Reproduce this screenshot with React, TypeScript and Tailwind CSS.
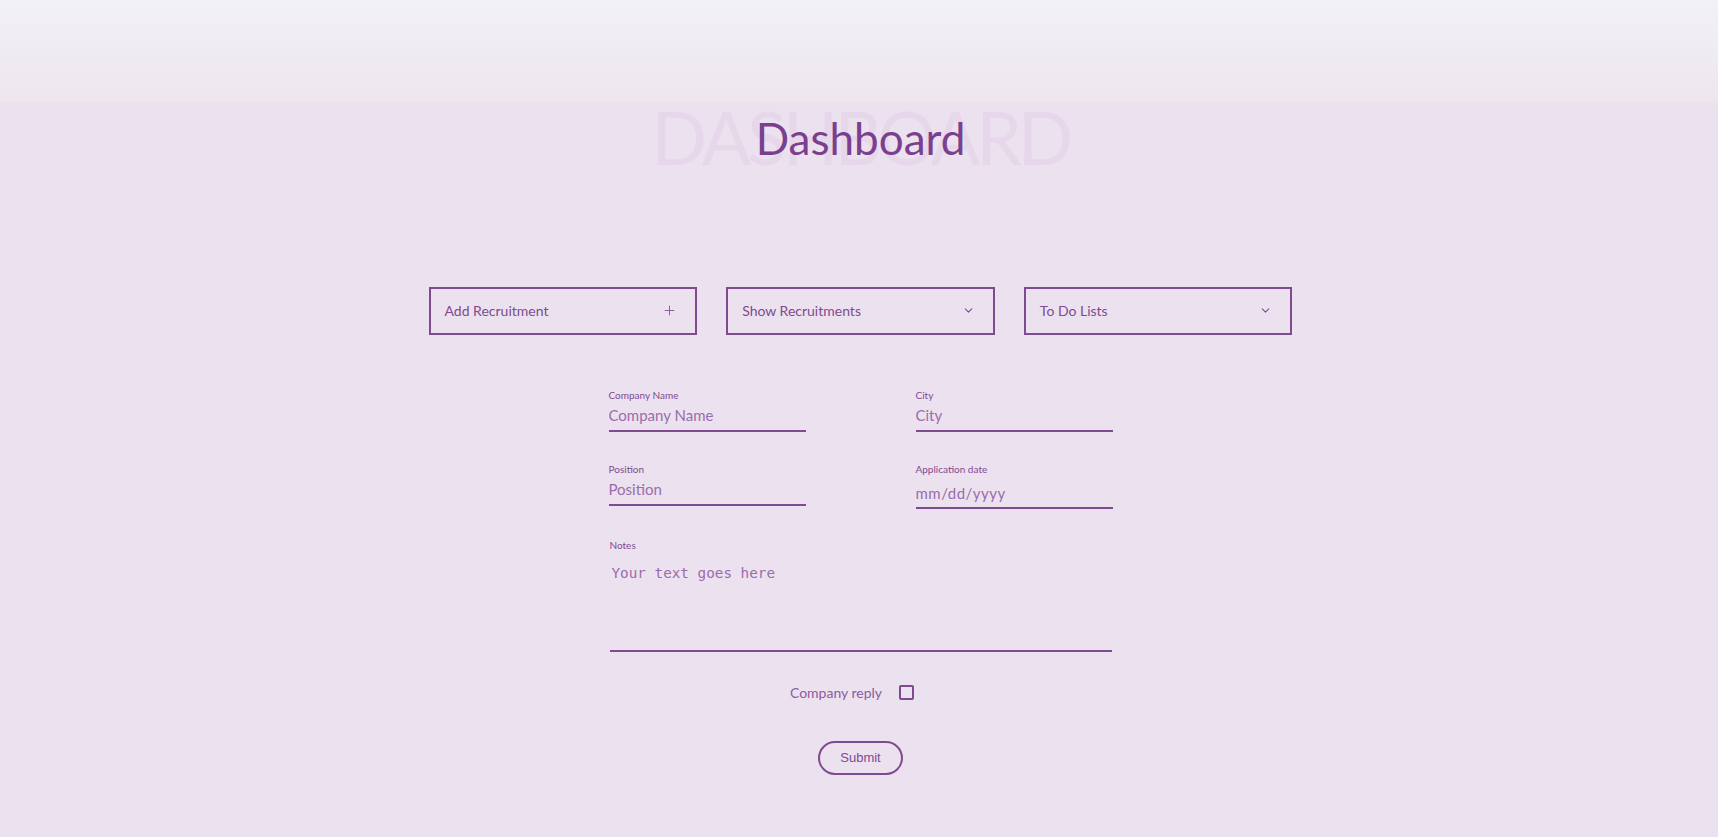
import React, { useState } from "react";
import { Plus, ChevronDown } from "lucide-react";

const font = "font-['Lato','Open_Sans',sans-serif]";

function NavButton({ label, icon }: { label: string; icon: "plus" | "chevron" }) {
  return (
    <button className="h-[48px] border-2 border-[#7e4b91] flex items-center justify-between pl-[14px] pr-[18px] pb-[1px] text-[#7e4b91] text-[14px]">
      <span>{label}</span>
      {icon === "plus" ? <Plus size={15} strokeWidth={1.4} /> : <ChevronDown size={13} strokeWidth={2} />}
    </button>
  );
}

function Field({ label, placeholder, type = "text" }: { label: string; placeholder: string; type?: string }) {
  return (
    <div className="flex flex-col">
      <label className="text-[10px] leading-[12px] text-[#7e4b91]">{label}</label>
      <input
        type="text"
        placeholder={placeholder}
        className={
          "mt-[4px] w-[197px] bg-transparent border-b-2 border-[#7e4b91] outline-none text-[15px] text-[#7e4b91] placeholder:text-[#9a6cad] " +
          (type === "date" ? "h-[30px] pt-[1px] pb-[2px] tracking-[0.5px]" : "h-[27px] pb-[5px]")
        }
      />
    </div>
  );
}

export default function App() {
  const [reply, setReply] = useState(false);

  return (
    <div className={"min-h-screen w-full pl-[3px] bg-[linear-gradient(to_bottom,#f2f1f6_0px,#ede6ef_102px,#ece1ee_102px)] " + font}>
      {/* Title */}
      <div className="relative h-[200px] flex items-center justify-center pt-[75px]">
        <div className="absolute inset-x-0 top-[75px] bottom-0 flex items-center justify-center">
          <span className="text-[73px] leading-none text-[#e6d8ea] tracking-[-4px]">DASHBOARD</span>
        </div>
        <h1 className="relative text-[44px] leading-none text-[#7a3f8e]">Dashboard</h1>
      </div>

      {/* Top actions */}
      <div className="mt-[87px] mx-auto w-[864px] grid grid-cols-3 gap-[29px]">
        <NavButton label="Add Recruitment" icon="plus" />
        <NavButton label="Show Recruitments" icon="chevron" />
        <NavButton label="To Do Lists" icon="chevron" />
      </div>

      {/* Form */}
      <form className="mt-[54px] mx-auto w-[504px] flex flex-col items-stretch" onSubmit={e => e.preventDefault()}>
        <div className="grid grid-cols-2 gap-x-[110px] gap-y-[31px]">
          <Field label="Company Name" placeholder="Company Name" />
          <Field label="City" placeholder="City" />
          <Field label="Position" placeholder="Position" />
          <Field label="Application date" placeholder="mm/dd/yyyy" type="date" />
        </div>

        <div className="mt-[30px] flex flex-col">
          <label className="text-[10px] leading-[12px] text-[#7e4b91] pl-[1px]">Notes</label>
          <textarea
            placeholder="Your text goes here"
            className="mt-[4px] ml-[1px] w-[502px] h-[97px] resize-none bg-transparent border-b-2 border-[#7e4b91] outline-none px-[2px] pt-[8px] text-[14.3px] text-[#7e4b91] placeholder:text-[#9a6cad] font-['DejaVu_Sans_Mono',monospace]"
          />
        </div>

        <div className="mt-[30px] mr-[17px] flex items-center justify-center gap-[17px]">
          <span className="text-[14px] text-[#8a5c9e]">Company reply</span>
          <button
            type="button"
            onClick={() => setReply(!reply)}
            className="w-[15px] h-[15px] rounded-[2px] border-2 border-[#7e4b91] flex items-center justify-center"
          >
            {reply && <span className="w-[7px] h-[7px] bg-[#7e4b91]" />}
          </button>
        </div>

        <div className="mt-[38px] flex justify-center">
          <button
            type="submit"
            className="w-[85px] h-[34px] rounded-full border-2 border-[#7e4b91] text-[13px] text-[#7e4b91] font-['Liberation_Sans',Arial,sans-serif]"
          >
            Submit
          </button>
        </div>
      </form>
    </div>
  );
}
